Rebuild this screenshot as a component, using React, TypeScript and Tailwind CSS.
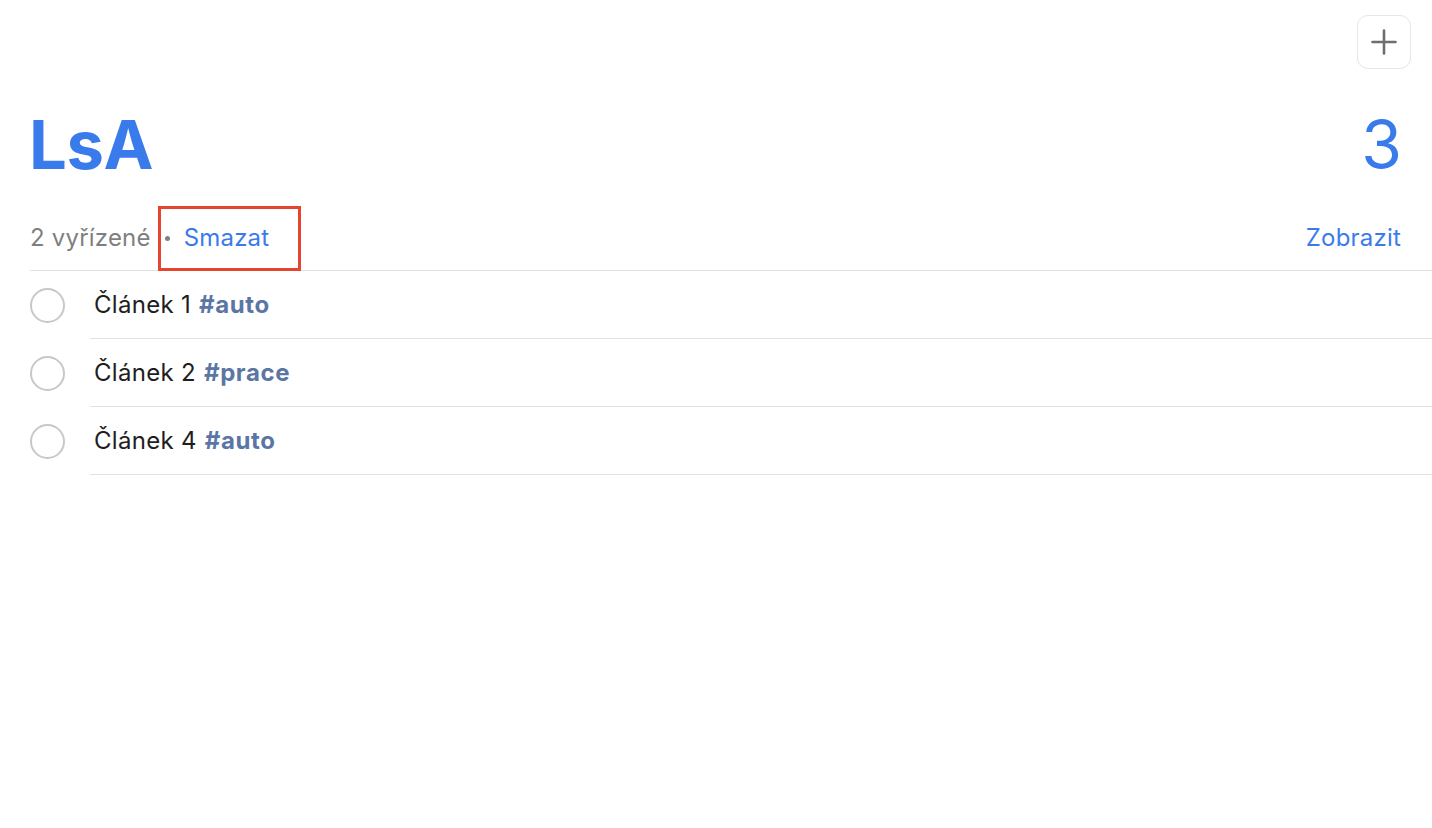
import React from "react";

const rows = [
  { name: "Článek 1", tag: "#auto" },
  { name: "Článek 2", tag: "#prace" },
  { name: "Článek 4", tag: "#auto" },
];

export default function App() {
  return (
    <div
      className="w-[1432px] h-[828px] bg-white overflow-hidden"
      style={{ fontFamily: "Inter, 'Noto Sans', sans-serif" }}
    >
      <div className="flex justify-end pt-[15px] pr-[21px]">
        <button className="w-[54px] h-[54px] rounded-[11px] border border-[#e6e6e6] bg-white flex items-center justify-center">
          <svg width="30" height="30" viewBox="0 0 30 30">
            <path d="M15 3.5V26.5M3.5 15H26.5" stroke="#6e6e6e" strokeWidth="2.6" strokeLinecap="round" />
          </svg>
        </button>
      </div>
      <div className="flex justify-between items-center pl-[29px] pr-[30px] mt-[30px] h-[90px]">
        <div className="text-[67px] font-bold text-[#3a7bec] leading-none tracking-[-0.5px]">LsA</div>
        <div className="text-[66px] font-normal text-[#3a7bec] leading-none">3</div>
      </div>
      <div className="ml-[30px] flex items-stretch justify-between h-[65px] mt-[17px] pr-[31px] border-b border-[#e3e3e3] text-[24px]">
        <div className="flex items-stretch">
          <span className="flex items-center text-[#7f7f7f] tracking-[0.2px]">2 vyřízené</span>
          <span className="relative flex items-center">
            <span className="w-[5px] h-[5px] rounded-full bg-[#808080] ml-[14px] mr-[14px]"></span>
            <span className="text-[#3a7bec] tracking-[0.2px]">Smazat</span>
            <span className="absolute left-[7px] top-0 w-[143px] h-[65px] border-[3.5px] border-[#e5452f]"></span>
          </span>
        </div>
        <span className="flex items-center text-[#3a7bec] tracking-[0.2px]">Zobrazit</span>
      </div>
      <div className="ml-[30px]">
        {rows.map((r) => (
          <div key={r.name} className="flex items-stretch h-[68px]">
            <div className="w-[60px] flex items-center">
              <div className="w-[35px] h-[35px] rounded-full border-2 border-[#c8c8c8]"></div>
            </div>
            <div className="flex-1 flex items-center border-b border-[#e3e3e3] pl-[4px] text-[24px]">
              <span className="text-[#1e1e1e] tracking-[0.3px]">{r.name}</span>
              <span className="ml-[8px] font-bold text-[#5b76a4] tracking-[0.6px]">{r.tag}</span>
            </div>
          </div>
        ))}
      </div>
    </div>
  );
}
